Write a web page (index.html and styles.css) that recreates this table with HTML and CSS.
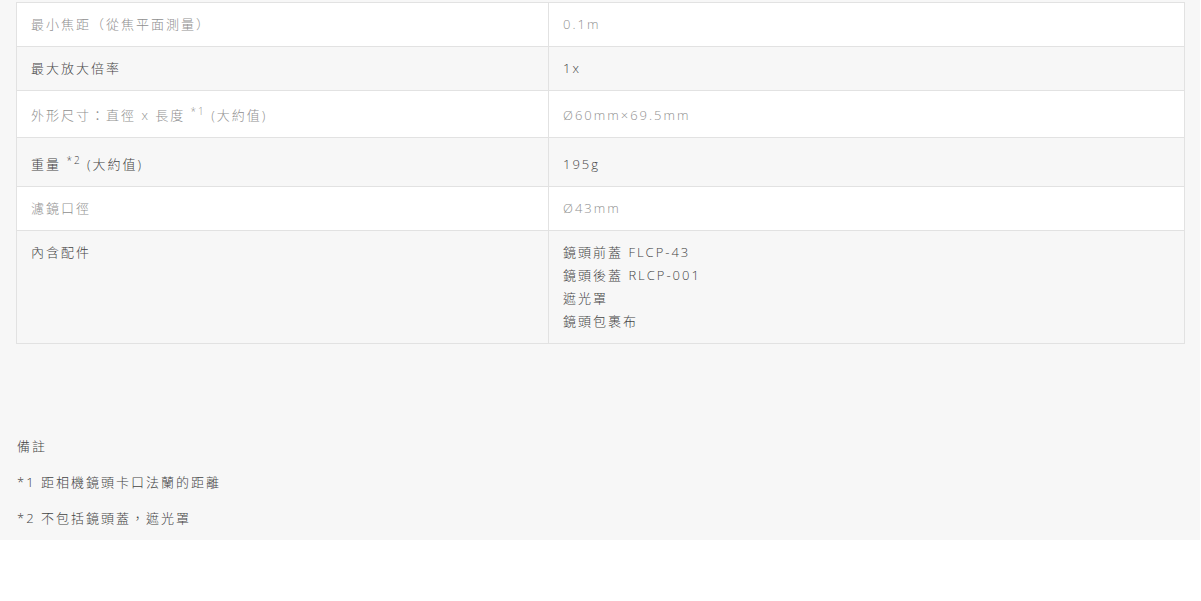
FILE: index.html
```html
<!DOCTYPE html>
<html lang="zh-Hant">
<head>
<meta charset="utf-8">
<link rel="stylesheet" href="styles.css">
</head>
<body>
<div class="spec">
  <table class="spec-table">
    <tr class="odd"><td class="label">最小焦距（從焦平面測量）</td><td class="value">0.1m</td></tr>
    <tr class="even"><td class="label">最大放大倍率</td><td class="value">1x</td></tr>
    <tr class="odd with-sup"><td class="label">外形尺寸：直徑 x 長度 <sup>*1</sup> (大約值)</td><td class="value">Ø60mm×69.5mm</td></tr>
    <tr class="even with-sup2"><td class="label">重量 <sup>*2</sup> (大約值)</td><td class="value">195g</td></tr>
    <tr class="odd"><td class="label">濾鏡口徑</td><td class="value">Ø43mm</td></tr>
    <tr class="even"><td class="label">內含配件</td><td class="value">鏡頭前蓋 FLCP-43<br>鏡頭後蓋 RLCP-001<br>遮光罩<br>鏡頭包裹布</td></tr>
  </table>
  <div class="notes">
    <p>備註</p>
    <p>*1 距相機鏡頭卡口法蘭的距離</p>
    <p>*2 不包括鏡頭蓋，遮光罩</p>
  </div>
</div>
</body>
</html>
```
FILE: styles.css
```css
html, body {
  margin: 0;
  padding: 0;
  background: #ffffff;
}
body {
  font-family: "Open Sans", "Noto Sans CJK TC", sans-serif;
  font-size: 13px;
  font-weight: 300;
  letter-spacing: 2px;
}
.spec {
  width: 1200px;
  height: 540px;
  box-sizing: border-box;
  background: #f7f7f7;
  padding: 2px 16px 0 16px;
}
.spec-table {
  width: 1169px;
  border-collapse: collapse;
  border: 1px solid #e2e2e2;
}
.spec-table td {
  padding: 10px 14px;
  line-height: 23px;
  vertical-align: top;
  border-top: 1px solid #e2e2e2;
  border-bottom: 1px solid #e2e2e2;
}
.spec-table td.label {
  width: 503px;
  border-right: 1px solid #e2e2e2;
}
.spec-table .with-sup td {
  padding-top: 13px;
}
.spec-table .with-sup2 td {
  padding-top: 15px;
}
.spec-table .odd td {
  background: #ffffff;
  color: #8f8f8f;
}
.spec-table .even td {
  background: #f7f7f7;
  color: #444444;
}
.spec-table sup {
  font-size: 10px;
  line-height: 0;
  vertical-align: 5px;
}
.notes {
  padding-top: 91px;
  color: #444444;
}
.notes p {
  margin: 0 0 13px 1px;
  line-height: 23px;
}
```
